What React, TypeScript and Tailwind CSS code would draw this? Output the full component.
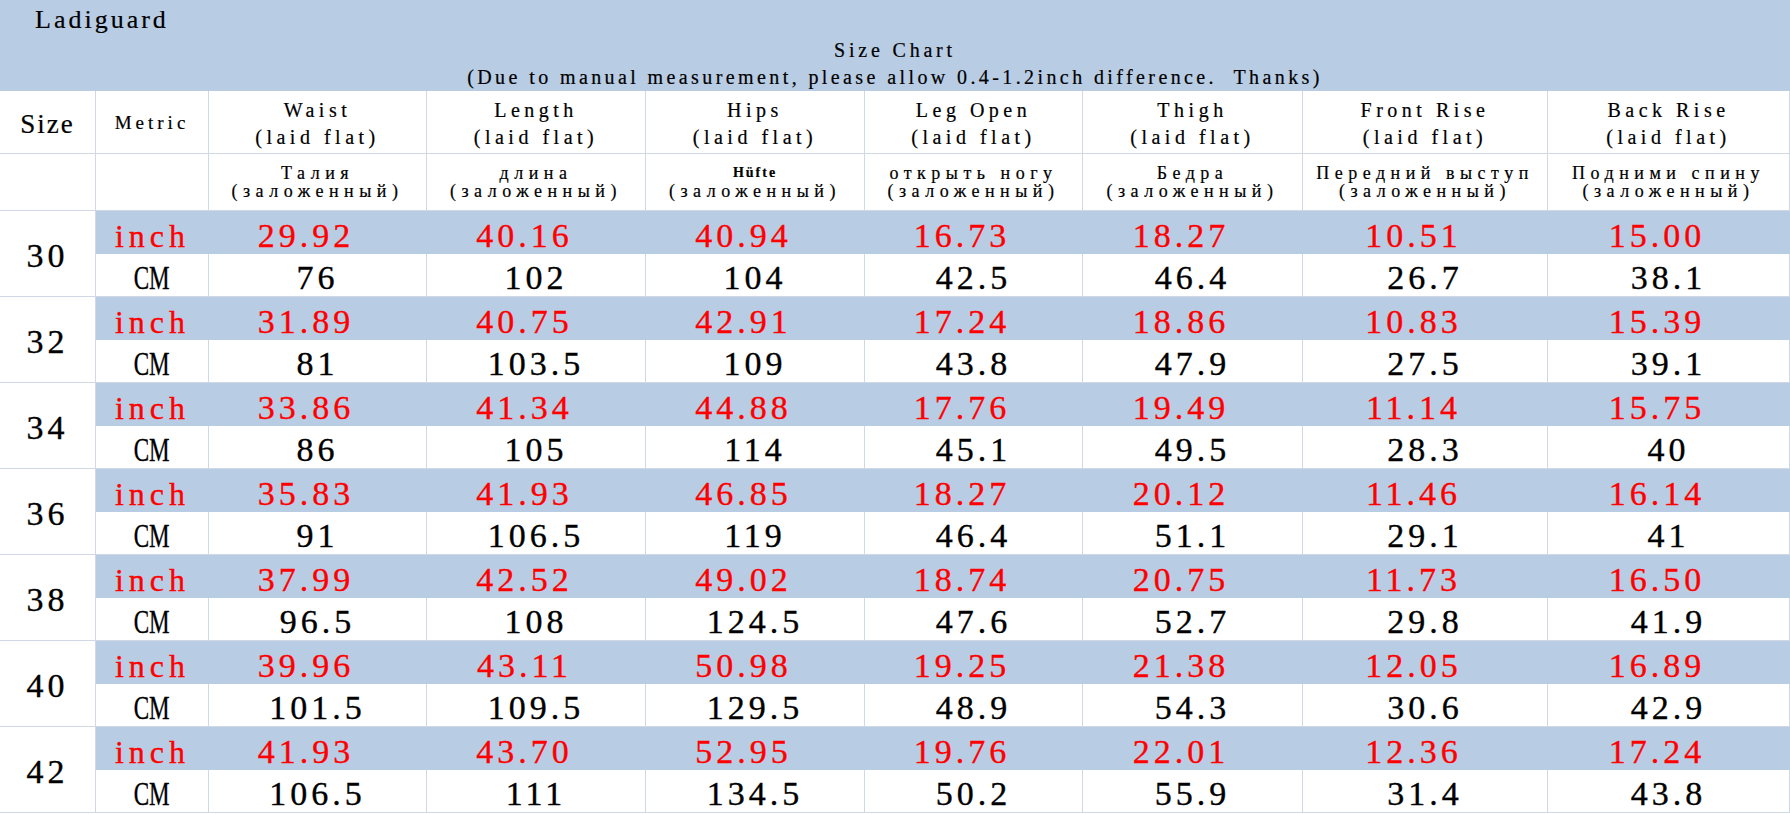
const BLUE = "bg-[#b8cce4]";
const LINE = "border-[#d0d7e5]";

type Col = { title: string; ru: string; small?: boolean; inch: string[]; cm: string[] };

const sizes = ["30", "32", "34", "36", "38", "40", "42"];

const cols: Col[] = [
  {
    title: "Waist",
    ru: "Талия",
    inch: ["29.92", "31.89", "33.86", "35.83", "37.99", "39.96", "41.93"],
    cm: ["76", "81", "86", "91", "96.5", "101.5", "106.5"],
  },
  {
    title: "Length",
    ru: "длина",
    inch: ["40.16", "40.75", "41.34", "41.93", "42.52", "43.11", "43.70"],
    cm: ["102", "103.5", "105", "106.5", "108", "109.5", "111"],
  },
  {
    title: "Hips",
    ru: "Hüfte",
    small: true,
    inch: ["40.94", "42.91", "44.88", "46.85", "49.02", "50.98", "52.95"],
    cm: ["104", "109", "114", "119", "124.5", "129.5", "134.5"],
  },
  {
    title: "Leg Open",
    ru: "открыть ногу",
    inch: ["16.73", "17.24", "17.76", "18.27", "18.74", "19.25", "19.76"],
    cm: ["42.5", "43.8", "45.1", "46.4", "47.6", "48.9", "50.2"],
  },
  {
    title: "Thigh",
    ru: "Бедра",
    inch: ["18.27", "18.86", "19.49", "20.12", "20.75", "21.38", "22.01"],
    cm: ["46.4", "47.9", "49.5", "51.1", "52.7", "54.3", "55.9"],
  },
  {
    title: "Front Rise",
    ru: "Передний выступ",
    inch: ["10.51", "10.83", "11.14", "11.46", "11.73", "12.05", "12.36"],
    cm: ["26.7", "27.5", "28.3", "29.1", "29.8", "30.6", "31.4"],
  },
  {
    title: "Back Rise",
    ru: "Подними спину",
    inch: ["15.00", "15.39", "15.75", "16.14", "16.50", "16.89", "17.24"],
    cm: ["38.1", "39.1", "40", "41", "41.9", "42.9", "43.8"],
  },
];

// big figures in the body of the chart
const NUM = "text-[34px] leading-[34px] tracking-[4px] [-webkit-text-stroke:0.35px]";

export default function App() {
  return (
    <div className="w-[1790px] h-[814px] overflow-hidden bg-white text-black font-['Liberation_Serif','Times_New_Roman',serif]">
      {/* title band */}
      <div className={`${BLUE} h-[91px] [-webkit-text-stroke:0.2px]`}>
        <div className="pl-[35px] pt-[5px] text-[26px] leading-[30px] tracking-[3px]">Ladiguard</div>
        <div className="mt-[2px] text-center text-[20px] leading-[27px] tracking-[3.8px]">Size Chart</div>
        <div className="text-center text-[20px] leading-[27px] tracking-[3.4px] whitespace-pre">
          (Due to manual measurement, please allow 0.4-1.2inch difference.  Thanks)
        </div>
      </div>

      <div className="grid grid-cols-[96px_113px_218px_219px_219px_218px_220px_245px_242px] [-webkit-text-stroke:0.2px]">
        {/* header row 1 */}
        <div className={`h-[63px] border-r border-b ${LINE} flex items-center justify-center pt-[5px] text-[27px] tracking-[2px]`}>
          Size
        </div>
        <div className={`h-[63px] border-r border-b ${LINE} flex items-center justify-center pt-[3px] text-[19px] tracking-[4px]`}>
          Metric
        </div>
        {cols.map((c) => (
          <div
            key={c.title}
            className={`h-[63px] border-r border-b ${LINE} flex flex-col items-center justify-center pt-[4px] text-[20px] leading-[27px] tracking-[4.5px]`}
          >
            <span>{c.title}</span>
            <span>(laid flat)</span>
          </div>
        ))}

        {/* header row 2 */}
        <div className={`h-[57px] border-r border-b ${LINE}`} />
        <div className={`h-[57px] border-r border-b ${LINE}`} />
        {cols.map((c) => (
          <div
            key={c.title + "ru"}
            className={`h-[57px] border-r border-b ${LINE} flex flex-col items-center justify-center text-[18px] leading-[18px] tracking-[5.5px]`}
          >
            <span className={c.small ? "text-[14px] font-bold tracking-[2px]" : ""}>{c.ru}</span>
            <span>(заложенный)</span>
          </div>
        ))}

        {/* data */}
        {sizes.map((s, i) => (
          <SizeGroup key={s} size={s} index={i} />
        ))}
      </div>
    </div>
  );
}

function SizeGroup({ size, index }: { size: string; index: number }) {
  return (
    <>
      <div className={`row-span-2 border-r border-b ${LINE} flex items-center justify-center pt-[4px] ${NUM} tracking-[1px]`}>
        {size}
      </div>
      <div className={`${BLUE} h-[43px] flex items-center justify-center pt-[6px] text-[32px] leading-[32px] tracking-[5px] text-[#ff0000] [-webkit-text-stroke:0.35px]`}>
        inch
      </div>
      {cols.map((c) => (
        <div
          key={c.title + "in"}
          className={`${BLUE} h-[43px] flex items-center justify-center pt-[6px] pr-[24px] ${NUM} text-[#ff0000]`}
        >
          {c.inch[index]}
        </div>
      ))}
      <div className={`h-[43px] border-r border-b ${LINE} flex items-center justify-center pt-[6px] text-[33px] leading-[33px] [-webkit-text-stroke:0.35px]`}>
        <span className="inline-block scale-x-[0.7]">CM</span>
      </div>
      {cols.map((c) => (
        <div
          key={c.title + "cm"}
          className={`h-[43px] border-r border-b ${LINE} flex items-center justify-center pt-[6px] ${NUM}`}
        >
          {c.cm[index]}
        </div>
      ))}
    </>
  );
}
